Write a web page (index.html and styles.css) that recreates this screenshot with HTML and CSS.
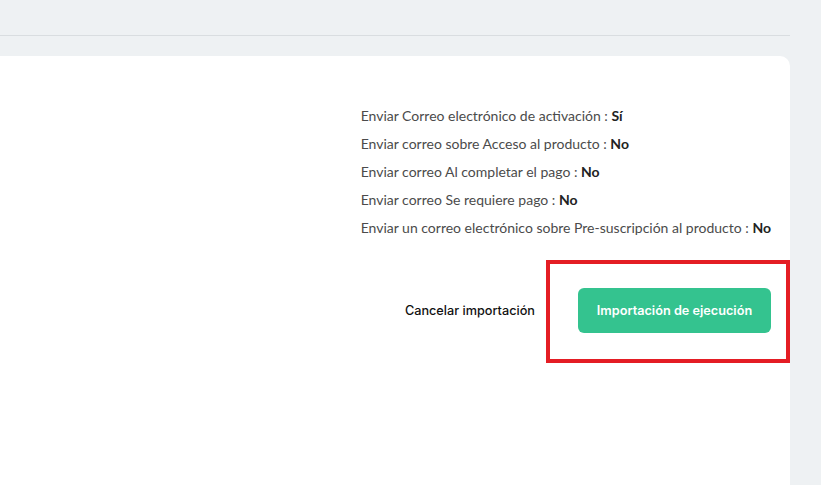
FILE: index.html
```html
<!DOCTYPE html>
<html>
  <head>
    <meta charset="utf-8">
    <link rel="stylesheet" href="styles.css">
  </head>
  <body>
    <div class="topbar"></div>
    <div class="card">
      <div class="import-summary">
        <ul class="mail-options">
          <li>Enviar Correo electrónico de activación : <b>Sí</b></li>
          <li>Enviar correo sobre Acceso al producto : <b>No</b></li>
          <li>Enviar correo Al completar el pago : <b>No</b></li>
          <li>Enviar correo Se requiere pago : <b>No</b></li>
          <li>Enviar un correo electrónico sobre Pre-suscripción al producto : <b>No</b></li>
        </ul>
        <div class="actions">
          <button type="button" class="btnCancel">Cancelar importación</button>
          <span class="highlight">
            <button type="button" class="btnRun">Importación de ejecución</button>
          </span>
        </div>
      </div>
    </div>
  </body>
</html>
```

FILE: styles.css
```css
* {
  box-sizing: border-box;
}
html, body {
  height: 100%;
}
body {
  margin: 0;
  background-color: #eef1f3;
  display: flex;
  flex-direction: column;
  overflow: hidden;
}
.topbar {
  height: 36px;
  flex: none;
  border-bottom: 1px solid #d9dde0;
  margin-right: 31px;
}
.card {
  flex: 1;
  margin-top: 20px;
  margin-right: 31px;
  background-color: #fff;
  border-radius: 0 10px 0 0;
  display: flex;
  justify-content: flex-end;
  padding: 46px 19px 0 0;
}
.mail-options {
  list-style: none;
  margin: 0;
  padding: 0;
  font-family: Lato, "Liberation Sans", sans-serif;
  font-size: 14px;
  line-height: 28px;
  color: #4b4b4b;
}
.mail-options b {
  color: #222;
  font-weight: 700;
}
.actions {
  display: flex;
  justify-content: flex-end;
  align-items: center;
  gap: 43px;
  margin-top: 46px;
}
.btnCancel {
  font-family: Inter, "Liberation Sans", sans-serif;
  font-size: 12.7px;
  font-weight: 500;
  color: #111;
  background: none;
  border: 0;
  padding: 0;
}
.highlight {
  position: relative;
  display: flex;
}
.highlight::after {
  content: "";
  position: absolute;
  left: -32px;
  top: -28px;
  right: -19px;
  bottom: -30px;
  border: 4px solid #e41d24;
  pointer-events: none;
}
.btnRun {
  width: 193px;
  height: 45px;
  font-family: Inter, "Liberation Sans", sans-serif;
  font-size: 12.7px;
  font-weight: 600;
  color: #fff;
  background-color: #34c38f;
  border: 0;
  border-radius: 6px;
}
```
